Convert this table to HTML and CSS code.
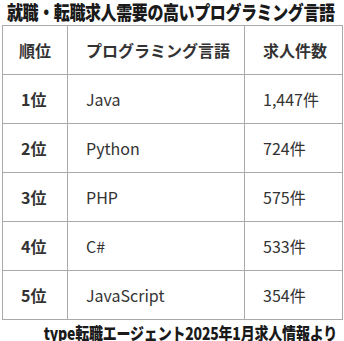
FILE: index.html
```html
<!DOCTYPE html>
<html lang="ja">
<head>
<meta charset="utf-8">
<link rel="stylesheet" href="styles.css">
</head>
<body>
<div class="page">
  <div class="title"><span class="stretch">就職・転職求人需要の高いプログラミング言語</span></div>
  <table class="rank">
    <colgroup>
      <col class="c1"><col class="c2"><col class="c3">
    </colgroup>
    <thead>
      <tr><th class="center">順位</th><th>プログラミング言語</th><th>求人件数</th></tr>
    </thead>
    <tbody>
      <tr><th>1位</th><td>Java</td><td>1,447件</td></tr>
      <tr><th>2位</th><td>Python</td><td>724件</td></tr>
      <tr><th>3位</th><td>PHP</td><td>575件</td></tr>
      <tr><th>4位</th><td>C#</td><td>533件</td></tr>
      <tr><th>5位</th><td>JavaScript</td><td>354件</td></tr>
    </tbody>
  </table>
  <div class="source"><span class="stretch-s">type転職エージェント2025年1月求人情報より</span></div>
</div>
</body>
</html>
```
FILE: styles.css
```css
html, body {
  margin: 0;
  padding: 0;
  background: #fff;
}
body {
  font-family: "Noto Sans CJK JP", "Noto Sans", sans-serif;
  color: #333;
}
.page {
  width: 340px;
  padding: 0 2px;
}
.title {
  height: 25px;
  line-height: 18px;
  white-space: nowrap;
  color: #1a1a1a;
  padding-left: 5px;
  box-sizing: border-box;
}
.stretch {
  display: inline-block;
  font-size: 16px;
  font-weight: 900;
  letter-spacing: -0.4px;
  transform: scaleY(1.22);
  transform-origin: 0 0;
}
.rank {
  width: 340px;
  border-collapse: collapse;
  table-layout: fixed;
}
.c1 { width: 65px; }
.c2 { width: 177px; }
.c3 { width: 98px; }
.rank th, .rank td {
  border: 1px solid #aaa;
  height: 48px;
  padding: 0 0 0 18px;
  text-align: left;
  font-size: 16px;
  vertical-align: middle;
}
.rank th {
  font-weight: 700;
  color: #333;
}
.rank td {
  font-weight: 400;
  color: #333;
}
.rank th.center {
  text-align: center;
  padding: 0;
}
.source {
  height: 22px;
  text-align: right;
  white-space: nowrap;
  padding-right: 5px;
  color: #1a1a1a;
  line-height: 16px;
  padding-top: 2px;
  box-sizing: border-box;
}
.stretch-s {
  display: inline-block;
  font-size: 14px;
  font-weight: 900;
  letter-spacing: -0.2px;
  transform: scaleY(1.2);
  transform-origin: 0 0;
}
```
